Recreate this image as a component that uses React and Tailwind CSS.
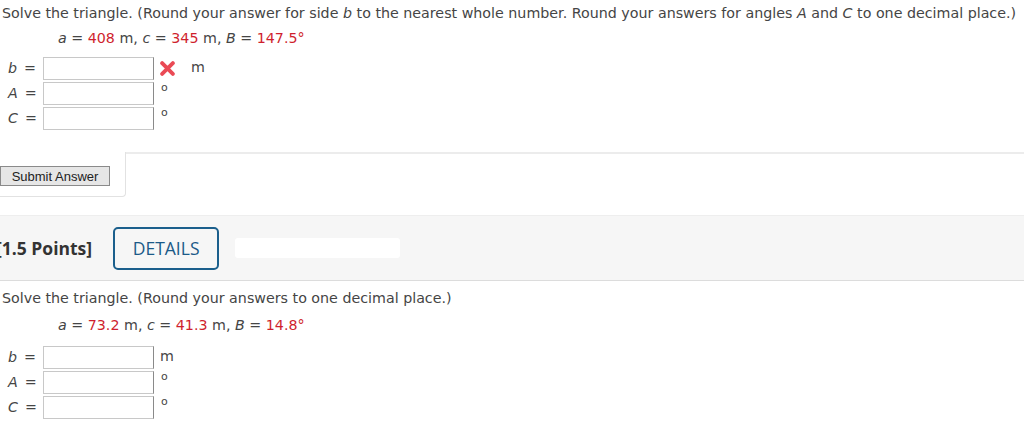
import React from "react";

const V = { fontFamily: '"DejaVu Sans", Verdana, sans-serif' };
const OS = { fontFamily: '"Open Sans", sans-serif' };

function Var({ children }) {
  return <i className="italic">{children}</i>;
}

function Row({ label, unit, wrong }) {
  return (
    <div className="flex items-center h-[25px]">
      <div className="w-[43px] pl-[8px] flex items-center">
        <Var>{label}</Var>
        <span className="ml-[7px]">=</span>
      </div>
      <div className="w-[111px] h-[23px] border border-[#c8c8c8] border-r-[#8a8a8a] bg-white" />
      {wrong ? (
        <div className="flex items-center">
          <svg width="15" height="15" viewBox="0 0 14 14" className="ml-[6px]">
            <path d="M2 2 L12 12 M12 2 L2 12" stroke="#ea4a55" strokeWidth="3.6" strokeLinecap="round" />
          </svg>
          <span className="ml-[16px] -mt-[2px]">{unit}</span>
        </div>
      ) : (
        <span className={unit === "m" ? "ml-[6px] -mt-[2px]" : "ml-[7px] -mt-[10px] text-[11px]"}>{unit === "m" ? "m" : "o"}</span>
      )}
    </div>
  );
}

function Given({ a, c, B }) {
  return (
    <div className="pl-[58px] h-[26px] flex items-center whitespace-nowrap">
      <Var>a</Var>&nbsp;=&nbsp;<span className="text-[#cf1f2e]">{a}</span>&nbsp;m,&nbsp;<Var>c</Var>&nbsp;=&nbsp;
      <span className="text-[#cf1f2e]">{c}</span>&nbsp;m,&nbsp;<Var>B</Var>&nbsp;=&nbsp;
      <span className="text-[#cf1f2e]">{B}°</span>
    </div>
  );
}

export default function App() {
  return (
    <div className="w-[1024px] h-[433px] overflow-hidden bg-white text-[#454545] text-[14.25px]" style={V}>
      <div className="pl-[2px] pt-[1px] h-[26px] flex items-center whitespace-nowrap">
        Solve the triangle. (Round your answer for side&nbsp;<Var>b</Var>&nbsp;to the nearest whole number. Round your answers for angles&nbsp;<Var>A</Var>&nbsp;and&nbsp;<Var>C</Var>&nbsp;to one decimal place.)
      </div>
      <Given a="408" c="345" B="147.5" />
      <div className="pt-[4px]">
        <Row label="b" unit="m" wrong />
        <Row label="A" unit="deg" />
        <Row label="C" unit="deg" />
      </div>
      <div className="mt-[21px] flex">
        <div className="w-[126px] h-[45px] border-r border-b border-[#e2e2e2] rounded-br-[4px] flex items-center">
          <button
            className="mt-[4px] h-[20px] w-[110px] bg-[#e6e6e6] border border-[#8a8a8a] text-[13px] text-[#222] leading-none"
            style={{ fontFamily: '"Liberation Sans", Arial, sans-serif' }}
          >
            Submit Answer
          </button>
        </div>
        <div className="flex-1 border-t-2 border-[#ececec]" />
      </div>
      <div className="mt-[18px] h-[66px] bg-[#f6f6f6] border-t border-[#eeeeee] border-b border-b-[#dcdcdc] flex items-center overflow-hidden" style={OS}>
        <span className="-ml-[4px] font-bold text-[17.5px] text-[#333] whitespace-nowrap">[1.5 Points]</span>
        <div className="ml-[21px] mt-[1px] w-[106px] h-[43px] border-2 border-[#1b5f8c] rounded-[5px] flex items-center justify-center text-[17.5px] text-[#1b5a88]">
          DETAILS
        </div>
        <div className="ml-[16px] w-[165px] h-[20px] bg-white rounded-[3px] blur-[0.5px]" />
      </div>
      <div className="pl-[2px] pt-[5px] h-[30px] flex items-center whitespace-nowrap">
        Solve the triangle. (Round your answers to one decimal place.)
      </div>
      <div className="pt-[2px]">
        <Given a="73.2" c="41.3" B="14.8" />
      </div>
      <div className="pt-[6px]">
        <Row label="b" unit="m" />
        <Row label="A" unit="deg" />
        <Row label="C" unit="deg" />
      </div>
    </div>
  );
}
